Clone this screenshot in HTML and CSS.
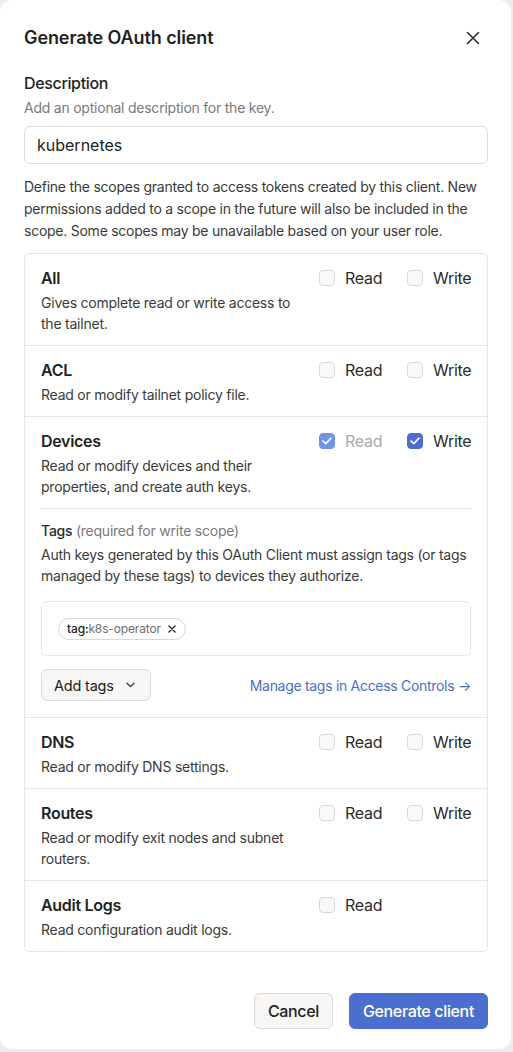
FILE: index.html
```html
<!DOCTYPE html>
<html lang="en">
<head>
<meta charset="utf-8">
<title>Generate OAuth client</title>
<link rel="stylesheet" href="styles.css">
</head>
<body>
<div class="modal">
  <header class="head">
    <h2 class="title">Generate OAuth client</h2>
    <button class="close" aria-label="Close">
      <svg width="14" height="14" viewBox="0 0 14 14"><path d="M1.5 1.5L12.5 12.5M12.5 1.5L1.5 12.5" stroke="#2b2b2b" stroke-width="1.6" stroke-linecap="round" fill="none"/></svg>
    </button>
  </header>

  <section class="field">
    <div class="field-label">Description</div>
    <p class="hint">Add an optional description for the key.</p>
    <div class="input">kubernetes</div>
  </section>

  <p class="intro">Define the scopes granted to access tokens created by this client. New permissions added to a scope in the future will also be included in the scope. Some scopes may be unavailable based on your user role.</p>

  <div class="scopes">
    <div class="scope">
      <div class="scope-main">
        <div class="scope-info">
          <h3 class="scope-name">All</h3>
          <p class="scope-desc">Gives complete read or write access to the tailnet.</p>
        </div>
        <div class="perms">
          <label class="perm"><span class="box"></span>Read</label>
          <label class="perm"><span class="box"></span>Write</label>
        </div>
      </div>
    </div>

    <div class="scope">
      <div class="scope-main">
        <div class="scope-info">
          <h3 class="scope-name">ACL</h3>
          <p class="scope-desc">Read or modify tailnet policy file.</p>
        </div>
        <div class="perms">
          <label class="perm"><span class="box"></span>Read</label>
          <label class="perm"><span class="box"></span>Write</label>
        </div>
      </div>
    </div>

    <div class="scope">
      <div class="scope-main">
        <div class="scope-info">
          <h3 class="scope-name">Devices</h3>
          <p class="scope-desc">Read or modify devices and their properties, and create auth keys.</p>
        </div>
        <div class="perms">
          <label class="perm perm-disabled"><span class="box box-checked box-light"><svg width="10" height="8" viewBox="0 0 10 8"><path d="M1 4L3.8 6.6L9 1.2" stroke="#fff" stroke-width="1.7" fill="none" stroke-linecap="round" stroke-linejoin="round"/></svg></span>Read</label>
          <label class="perm"><span class="box box-checked"><svg width="10" height="8" viewBox="0 0 10 8"><path d="M1 4L3.8 6.6L9 1.2" stroke="#fff" stroke-width="1.7" fill="none" stroke-linecap="round" stroke-linejoin="round"/></svg></span>Write</label>
        </div>
      </div>
      <div class="tags">
        <div class="tags-label">Tags <span class="muted">(required for write scope)</span></div>
        <p class="tags-desc">Auth keys generated by this OAuth Client must assign tags (or tags managed by these tags) to devices they authorize.</p>
        <div class="tag-box">
          <span class="chip"><span class="chip-key">tag:</span><span class="chip-val">k8s-operator</span>
            <svg class="chip-x" width="8" height="8" viewBox="0 0 8 8"><path d="M1 1L7 7M7 1L1 7" stroke="#222" stroke-width="1.4" stroke-linecap="round"/></svg>
          </span>
        </div>
        <div class="tags-actions">
          <button class="btn-sm">Add tags
            <svg width="9" height="6" viewBox="0 0 9 6"><path d="M1 1.2L4.5 4.6L8 1.2" stroke="#333" stroke-width="1.3" fill="none" stroke-linecap="round" stroke-linejoin="round"/></svg>
          </button>
          <a class="link" href="#">Manage tags in Access Controls →</a>
        </div>
      </div>
    </div>

    <div class="scope">
      <div class="scope-main">
        <div class="scope-info">
          <h3 class="scope-name">DNS</h3>
          <p class="scope-desc">Read or modify DNS settings.</p>
        </div>
        <div class="perms">
          <label class="perm"><span class="box"></span>Read</label>
          <label class="perm"><span class="box"></span>Write</label>
        </div>
      </div>
    </div>

    <div class="scope">
      <div class="scope-main">
        <div class="scope-info">
          <h3 class="scope-name">Routes</h3>
          <p class="scope-desc">Read or modify exit nodes and subnet routers.</p>
        </div>
        <div class="perms">
          <label class="perm"><span class="box"></span>Read</label>
          <label class="perm"><span class="box"></span>Write</label>
        </div>
      </div>
    </div>

    <div class="scope">
      <div class="scope-main">
        <div class="scope-info">
          <h3 class="scope-name">Audit Logs</h3>
          <p class="scope-desc">Read configuration audit logs.</p>
        </div>
        <div class="perms">
          <label class="perm"><span class="box"></span>Read</label>
        </div>
      </div>
    </div>
  </div>

  <footer class="foot">
    <button class="btn">Cancel</button>
    <button class="btn btn-primary">Generate client</button>
  </footer>
</div>
</body>
</html>
```

FILE: styles.css
```css
* { box-sizing: border-box; }

html, body {
  margin: 0;
  padding: 0;
}

body {
  background: #ececec;
  font-family: Inter, "Noto Sans", "Liberation Sans", sans-serif;
  color: #232323;
  width: 513px;
  height: 1052px;
  overflow: hidden;
}

.modal {
  width: 511px;
  height: 1049px;
  background: #fff;
  border-radius: 12px;
  padding: 24px 23px 22px 24px;
}

.head {
  display: flex;
  align-items: center;
  justify-content: space-between;
  height: 28px;
}

.title {
  margin: 0;
  font-size: 18px;
  line-height: 28px;
  font-weight: 600;
  color: #1f1f1f;
  letter-spacing: -0.1px;
}

.close {
  border: 0;
  background: none;
  padding: 0;
  width: 20px;
  height: 20px;
  display: flex;
  align-items: center;
  justify-content: center;
  margin-right: 5px;
}

.field {
  margin-top: 19px;
}

.field-label {
  font-size: 16px;
  line-height: 24px;
  font-weight: 500;
  color: #222;
  letter-spacing: -0.35px;
}

.hint {
  margin: 2px 0 0;
  font-size: 14px;
  line-height: 21px;
  color: #7a7a7a;
  letter-spacing: -0.23px;
}

.input {
  margin-top: 8px;
  height: 38px;
  border: 1px solid #dedddc;
  border-radius: 6px;
  padding: 0 12px;
  font-size: 16px;
  line-height: 36px;
  color: #222;
}

.intro {
  margin: 12px 0 0;
  font-size: 14px;
  line-height: 22px;
  color: #3a3a3a;
  letter-spacing: -0.25px;
}

.scopes {
  margin-top: 11px;
  border: 1px solid #e6e5e4;
  border-radius: 6px;
}

.scope {
  padding: 12px 16px 11px;
  border-top: 1px solid #e6e5e4;
}

.scope:first-child {
  border-top: 0;
}

.scope-main {
  display: flex;
  gap: 16px;
}

.scope-info {
  flex: 1;
  min-width: 0;
}

.scope-name {
  margin: 0;
  font-size: 16px;
  line-height: 24px;
  font-weight: 600;
  color: #232323;
  letter-spacing: -0.3px;
}

.scope-desc {
  margin: 2px 0 0;
  font-size: 14px;
  line-height: 21px;
  color: #3a3a3a;
  letter-spacing: -0.23px;
}

.perms {
  display: grid;
  grid-template-columns: 88px 64px;
  align-self: flex-start;
}

.perm {
  display: flex;
  align-items: center;
  gap: 10px;
  height: 24px;
  font-size: 16px;
  color: #2c2c2c;
  letter-spacing: -0.3px;
}

.perm-disabled {
  color: #a9a9a9;
}

.box {
  width: 16px;
  height: 16px;
  border: 1px solid #d9d8d6;
  border-radius: 4px;
  background: #faf9f8;
  display: flex;
  align-items: center;
  justify-content: center;
  flex: none;
}

.box-checked {
  background: #4a6dcf;
  border-color: #4a6dcf;
}

.box-light {
  background: #6f93e6;
  border-color: #6f93e6;
}

.tags {
  margin-top: 11px;
  border-top: 1px solid #e6e5e4;
  padding-top: 11px;
  padding-bottom: 5px;
}

.tags-label {
  font-size: 14px;
  line-height: 21px;
  font-weight: 500;
  color: #2a2a2a;
  letter-spacing: -0.23px;
}

.muted {
  font-weight: 400;
  color: #7a7a7a;
}

.tags-desc {
  margin: 3px 0 0;
  font-size: 14px;
  line-height: 21px;
  color: #3a3a3a;
  letter-spacing: -0.25px;
}

.tag-box {
  margin-top: 15px;
  border: 1px solid #e6e5e4;
  border-radius: 6px;
  padding: 16px 16px 15px;
  display: flex;
}

.chip {
  display: inline-flex;
  align-items: center;
  height: 22px;
  padding: 0 9px 0 8px;
  border: 1px solid #d9d8d6;
  border-radius: 11px;
  font-size: 12px;
  line-height: 20px;
  letter-spacing: -0.15px;
}

.chip-key {
  color: #222;
  font-weight: 500;
}

.chip-val {
  color: #6e6e6e;
}

.chip-x {
  margin-left: 7px;
}

.tags-actions {
  margin-top: 13px;
  display: flex;
  align-items: center;
  justify-content: space-between;
}

.btn-sm {
  height: 32px;
  padding: 0 15px 0 12px;
  border: 1px solid #dcdbd9;
  border-radius: 6px;
  background: #f7f6f5;
  font-family: inherit;
  font-size: 14.5px;
  font-weight: 400;
  color: #222;
  letter-spacing: -0.2px;
  display: flex;
  align-items: center;
  gap: 12px;
}

.link {
  font-size: 14px;
  color: #4a6dcf;
  text-decoration: none;
  letter-spacing: -0.3px;
}

.foot {
  margin-top: 41px;
  display: flex;
  justify-content: flex-end;
  gap: 16px;
}

.btn {
  height: 36px;
  padding: 0 13px;
  border: 1px solid #dcdbd9;
  border-radius: 6px;
  background: #f7f6f5;
  font-family: inherit;
  font-size: 16px;
  font-weight: 500;
  color: #222;
  letter-spacing: -0.35px;
}

.btn-primary {
  background: #4a6fce;
  border-color: #4a6fce;
  color: #fff;
}
```
